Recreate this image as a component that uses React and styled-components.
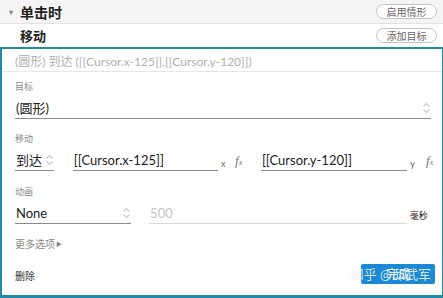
import React from "react";
import styled, { createGlobalStyle } from "styled-components";

const GlobalStyle = createGlobalStyle`
  html, body {
    margin: 0;
    padding: 0;
    background: #fff;
    font-family: Lato, "Noto Sans CJK SC", sans-serif;
    color: #333;
  }
`;

const Root = styled.div`
  width: 443px;
  height: 298px;
  display: flex;
  flex-direction: column;
  overflow: hidden;
`;

const HeadRow = styled.div`
  height: ${(p) => p.h}px;
  box-sizing: border-box;
  display: flex;
  align-items: center;
  justify-content: space-between;
  padding: 0 6px 0 9px;
  background: ${(p) => (p.gray ? "#f4f4f4" : "#fff")};
  border-bottom: ${(p) => (p.gray ? "1px solid #e2e2e2" : "none")};
`;

const HeadTitle = styled.div`
  display: flex;
  align-items: center;
  gap: 3px;
  font-size: ${(p) => (p.indent ? 13 : 14)}px;
  font-weight: bold;
  color: #222;
  padding-left: ${(p) => (p.indent ? "11px" : "0")};
`;

const Caret = styled.span`
  font-size: 8px;
  color: #888;
  width: 8px;
`;

const PillButton = styled.button`
  width: 61px;
  height: 15px;
  box-sizing: border-box;
  border: 1px solid #c4c4c4;
  border-radius: 8px;
  background: #fff;
  color: #666;
  font-family: "Noto Sans CJK SC", sans-serif;
  font-size: 10px;
  line-height: 13px;
  padding: 0;
`;

const Panel = styled.div`
  flex: 1;
  box-sizing: border-box;
  border: 2px solid #2289a6;
  border-bottom-width: 3px;
  border-right-width: 1px;
  display: flex;
  flex-direction: column;
`;

const Summary = styled.div`
  height: 23px;
  box-sizing: border-box;
  border-bottom: 1px solid #e6e6e6;
  padding: 0 0 0 13px;
  font-size: 12px;
  color: #b0b0b0;
  display: flex;
  align-items: center;
`;

const Body = styled.div`
  padding: 0 6px 0 13px;
  display: flex;
  flex-direction: column;
`;

const Label = styled.div`
  font-family: "Noto Sans CJK SC", sans-serif;
  font-size: 9px;
  color: #888;
  margin-top: ${(p) => p.mt}px;
  height: 12px;
  line-height: 12px;
`;

const FieldRow = styled.div`
  display: flex;
  align-items: flex-end;
  height: 24px;
  margin-top: 2px;
`;

const Field = styled.div`
  width: ${(p) => p.w}px;
  margin-left: ${(p) => p.ml || 0}px;
  box-sizing: border-box;
  height: 22px;
  border-bottom: 1px solid ${(p) => (p.light ? "#dadada" : "#8a8a8a")};
  display: flex;
  align-items: center;
  justify-content: space-between;
  font-size: 13px;
  color: ${(p) => (p.dim ? "#c4c4c4" : "#222")};
  padding-left: 1px;
`;

const Chevron = () => (
  <svg width="9" height="14" viewBox="0 0 9 14">
    <path d="M1.5 5.5 L4.5 2.5 L7.5 5.5 M1.5 8.5 L4.5 11.5 L7.5 8.5" fill="none" stroke="#c8c8c8" strokeWidth="1.1" />
  </svg>
);

const Suffix = styled.span`
  font-size: 9px;
  width: ${(p) => p.w}px;
  padding-left: 3px;
  padding-bottom: 2px;
  box-sizing: border-box;
  font-family: ${(p) => (p.cjk ? '"Noto Sans CJK SC", sans-serif' : "Lato, sans-serif")};
  color: ${(p) => (p.cjk ? "#222" : "#666")};
`;

const Fx = styled.span`
  font-family: "Liberation Serif", serif;
  font-style: italic;
  font-size: 13px;
  color: #777;
  width: ${(p) => p.w}px;
  padding-bottom: 2px;
  sub {
    font-size: 8px;
    vertical-align: baseline;
  }
`;

const MoreLink = styled.div`
  font-family: "Noto Sans CJK SC", sans-serif;
  font-size: 10px;
  color: #888;
  margin-top: 12px;
  display: flex;
  align-items: center;
  gap: 1px;
  span {
    font-size: 6px;
  }
`;

const Footer = styled.div`
  display: flex;
  align-items: center;
  justify-content: space-between;
  margin-top: 11px;
  padding-right: 1px;
`;

const Delete = styled.span`
  font-family: "Noto Sans CJK SC", sans-serif;
  font-size: 10px;
  color: #333;
  margin-top: 6px;
`;

const DoneWrap = styled.div`
  position: relative;
  margin-top: 1px;
`;

const DoneButton = styled.button`
  width: 74px;
  height: 20px;
  border: none;
  border-radius: 2px;
  background: #1b8ad6;
  color: #fff;
  font-family: "Noto Sans CJK SC", sans-serif;
  font-size: 12px;
  padding: 0;
`;

const Watermark = styled.span`
  position: absolute;
  right: 4px;
  top: 1px;
  white-space: nowrap;
  font-family: "Noto Sans CJK SC", sans-serif;
  font-size: 13px;
  color: rgba(255, 255, 255, 0.85);
  text-shadow: 0 0 1px rgba(0, 0, 0, 0.15);
  pointer-events: none;
`;

export default function App() {
  return (
    <Root>
      <GlobalStyle />
      <HeadRow h={24} gray>
        <HeadTitle>
          <Caret>▾</Caret>
          单击时
        </HeadTitle>
        <PillButton>启用情形</PillButton>
      </HeadRow>
      <HeadRow h={23}>
        <HeadTitle indent>移动</HeadTitle>
        <PillButton>添加目标</PillButton>
      </HeadRow>
      <Panel>
        <Summary>(圆形) 到达 ([[Cursor.x-125]],[[Cursor.y-120]])</Summary>
        <Body>
          <Label mt={9}>目标</Label>
          <FieldRow>
            <Field w={416}>
              (圆形)
              <Chevron />
            </Field>
          </FieldRow>
          <Label mt={14}>移动</Label>
          <FieldRow>
            <Field w={39}>
              到达
              <Chevron />
            </Field>
            <Field w={146} ml={19}>[[Cursor.x-125]]</Field>
            <Suffix w={17}>x</Suffix>
            <Fx w={26}>
              f<sub>x</sub>
            </Fx>
            <Field w={147}>[[Cursor.y-120]]</Field>
            <Suffix w={19}>y</Suffix>
            <Fx w={10}>
              f<sub>x</sub>
            </Fx>
          </FieldRow>
          <Label mt={15}>动画</Label>
          <FieldRow>
            <Field w={119}>
              None
              <Chevron />
            </Field>
            <Field w={264} ml={18} light dim>
              500
            </Field>
            <Suffix w={30} cjk>毫秒</Suffix>
          </FieldRow>
          <MoreLink>
            更多选项<span>▶</span>
          </MoreLink>
          <Footer>
            <Delete>删除</Delete>
            <DoneWrap>
              <DoneButton>完成</DoneButton>
              <Watermark>知乎 @邱武军</Watermark>
            </DoneWrap>
          </Footer>
        </Body>
      </Panel>
    </Root>
  );
}
